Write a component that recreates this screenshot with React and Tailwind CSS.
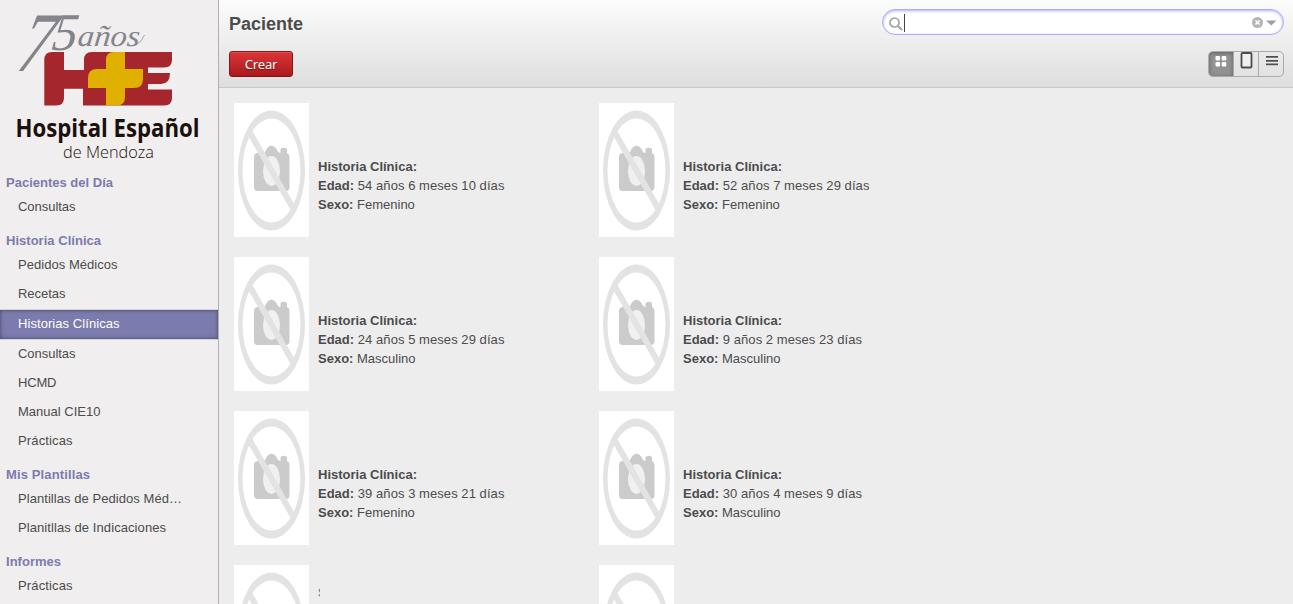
const menu = [
  { title: "Pacientes del Día", w: 107, items: [["Consultas", 57.5]] },
  {
    title: "Historia Clínica", w: 95,
    items: [["Pedidos Médicos", 99.5], ["Recetas", 47.5], ["Historias Clínicas", 101.5, true], ["Consultas", 57.5], ["HCMD", 38.5], ["Manual CIE10", 82.5], ["Prácticas", 54.5]],
  },
  { title: "Mis Plantillas", w: 84, items: [["Plantillas de Pedidos Méd…", 164], ["Planitllas de Indicaciones", 148]] },
  { title: "Informes", w: 55, items: [["Prácticas", 54.5]] },
];

const patients = [
  ["54 años 6 meses 10 días", "Femenino"],
  ["52 años 7 meses 29 días", "Femenino"],
  ["24 años 5 meses 29 días", "Masculino"],
  ["9 años 2 meses 23 días", "Masculino"],
  ["39 años 3 meses 21 días", "Femenino"],
  ["30 años 4 meses 9 días", "Masculino"],
];

function Logo() {
  return (
    <svg width="218" height="173" viewBox="0 0 218 173" className="block shrink-0">
      <g fill="#85848a" fontStyle="italic" fontFamily="Liberation Serif, serif">
        <text transform="translate(15 70.500) skewX(-14)" fontSize="85" textLength="32" lengthAdjust="spacingAndGlyphs">7</text>
        <text transform="translate(51 49.500) skewX(-8)" fontSize="53" textLength="25" lengthAdjust="spacingAndGlyphs">5</text>
        <text transform="translate(77 46) skewX(-6)" fontSize="30" textLength="62" lengthAdjust="spacingAndGlyphs">años</text>
      </g>
      <path d="M136 45Q141 43 144.500 35" fill="none" stroke="#85848a" strokeWidth=".7" />
      <path d="M52 52H64V70H84V60Q84 52 92 52H172V60Q172 67.500 164 67.500H148V73H170Q170 84 161 84H148V89.500H172V98Q172 105.500 164 105.500H83V88.700H64V98Q64 105.500 56 105.500H44.300V60Q44.300 52 52 52Z" fill="#a5262d" />
      <path d="M114 52H125V69H143V79Q143 88 134 88H125V97Q125 105.500 117 105.500H106V88H88V78Q88 69 97 69H106V60Q106 52 114 52Z" fill="#e0b000" />
      <g fill="#1c100d" fontFamily="Open Sans, sans-serif">
        <text x="15.500" y="137" fontSize="24.500" fontWeight="700" textLength="184" lengthAdjust="spacingAndGlyphs">Hospital Español</text>
        <text x="63" y="158" fontSize="16.500" fontWeight="300" textLength="91" lengthAdjust="spacingAndGlyphs">de Mendoza</text>
      </g>
    </svg>
  );
}

function FitText({ text, w, fill, bold }) {
  return (
    <svg width={w + 4} height="17" className="block overflow-visible">
      <text x="0" y="13" fontSize="13" fontWeight={bold ? 700 : 400} fill={fill} textLength={w}>{text}</text>
    </svg>
  );
}

function Placeholder() {
  return (
    <div className="h-[134px] w-[75px] shrink-0 bg-white">
      <svg width="75" height="134" viewBox="0 0 75 134" className="block blur-[0.7px]">
        <path d="M20 54Q20 50 24 50H29Q31 50 32.500 46Q34 43 37.500 42.500Q41 43 42.500 46Q44 50 46.500 50V46Q49.500 43.500 53 46V50Q55.500 51 55.500 54V84Q55.500 88 52 88H23.500Q20 88 20 84Z" fill="#cbcbcb" />
        <ellipse cx="37.500" cy="68" rx="8.500" ry="15" fill="#f0f0f0" />
        <path fillRule="evenodd" d="M4 67.500A33.500 60 0 0 1 71 67.500A33.500 60 0 0 1 4 67.500ZM8.500 67.500A29 52 0 0 0 66.500 67.500A29 52 0 0 0 8.500 67.500Z" fill="#e3e3e3" />
        <path d="M15.500 29L59.500 106" stroke="#e3e3e3" strokeWidth="6" />
      </svg>
    </div>
  );
}

export default function App() {
  return (
    <div className="flex h-[604px] w-full overflow-hidden bg-[#ededed] font-['Liberation_Sans',Arial,sans-serif] text-[13px] text-[#4c4c4c]">
      <aside className="flex w-[219px] shrink-0 flex-col border-r border-[#afafb6] bg-[#f0eeee]">
        <Logo />
        {menu.map((g) => (
          <section key={g.title} className="mb-[10px]">
            <h2 className="flex h-[19px] items-center pl-[6px]"><FitText text={g.title} w={g.w} fill="#7c7bad" bold /></h2>
            {g.items.map(([label, w, active]) =>
              active ? (
                <div key={label} className="h-[31px] pt-px">
                  <div className="h-[31px] border-y border-[#d4d2dc] bg-[#7c7bad] bg-clip-padding pt-[5px] pl-[18px] shadow-[inset_0_0_4px_rgba(0,0,0,0.45)]">
                    <FitText text={label} w={w} fill="#ffffff" />
                  </div>
                </div>
              ) : (
                <div key={label} className="h-[29px] pt-[6px] pl-[18px]"><FitText text={label} w={w} fill="#4c4c4c" /></div>
              )
            )}
          </section>
        ))}
      </aside>

      <main className="flex min-w-0 flex-1 flex-col">
        <header className="flex h-[88px] shrink-0 flex-col border-b border-[#c8c8c8] bg-linear-to-b from-[#fcfcfc] to-[#dedede] pr-[9px] pl-[10px]">
          <div className="flex h-[51px] items-start justify-between pt-[9px]">
            <h1 className="pt-[2px] text-[18px] leading-[27px] font-bold">Paciente</h1>
            <div className="flex h-[26px] w-[402px] items-center rounded-full border border-[#abaafb] bg-white pr-[6px] pl-[6px] shadow-[inset_0_1px_3px_#abaafb]">
              <svg width="14" height="14" viewBox="0 0 14 14" className="mt-[3px]" fill="none" stroke="#a3a3a3">
                <circle cx="5.500" cy="5.500" r="4.500" strokeWidth="1.700" />
                <path d="M9 9l4 4" strokeWidth="2.200" />
              </svg>
              <div className="ml-[1px] h-[18px] w-px translate-y-px bg-[#444]" />
              <svg width="25" height="12" viewBox="0 0 25 12" className="mt-px ml-auto">
                <circle cx="5.500" cy="5.500" r="5.500" fill="#b5b5b5" />
                <path d="M3.500 3.500l4 4M7.500 3.500l-4 4" stroke="white" strokeWidth="1.600" />
                <path d="M14 3.500H24.500L19.300 8.500Z" fill="#a0a0a0" />
              </svg>
            </div>
          </div>
          <div className="flex justify-between">
            <button className="flex h-[26px] w-[64px] items-center justify-center rounded-[3px] border border-[#801818] bg-linear-to-b from-[#dc3538] to-[#aa1a1c] pt-px font-['Noto_Sans',sans-serif] text-[13px] tracking-[-0.2px] text-white shadow-[inset_0_1px_0_rgba(255,255,255,0.15)] [text-shadow:0_1px_1px_rgba(0,0,0,0.4)]">Crear</button>
            <div className="flex h-[26px] w-[76px] overflow-hidden rounded-[5px] border border-[#aaaaaa]">
              <div className="flex w-[25px] justify-center border-r border-[#aaa] bg-[#929292] pt-[4px] shadow-[inset_0_1px_4px_rgba(0,0,0,0.35)]">
                <svg width="12" height="11" fill="white"><rect width="4.600" height="4.600" rx="1" x=".5" /><rect x="6.700" width="4.600" height="4.600" rx="1" /><rect x=".5" y="6" width="4.600" height="4.600" rx="1" /><rect x="6.700" y="6" width="4.600" height="4.600" rx="1" /></svg>
              </div>
              <div className="flex w-[25px] justify-center border-r border-[#aaa] pl-px">
                <svg width="13" height="17"><rect x="1.500" y="1" width="10" height="14.500" rx="1" fill="#f0f0f0" stroke="#4c4c4c" strokeWidth="1.800" /></svg>
              </div>
              <div className="flex flex-1 justify-center pt-[4px] pl-px">
                <svg width="12" height="11" fill="#4c4c4c"><rect width="12" height="1.700" y="0" /><rect y="4" width="12" height="1.700" /><rect y="7.500" width="12" height="1.700" /></svg>
              </div>
            </div>
          </div>
        </header>

        <div className="grid grid-cols-[365px_365px] content-start gap-y-[20px] pt-[15px] pl-[15px]">
          {patients.map(([age, sex]) => (
            <article key={age} className="flex h-[134px]">
              <Placeholder />
              <div className="pt-[54px] pl-[9px] leading-[19px] whitespace-nowrap">
                <p className="font-bold">Historia Clínica:</p>
                <p className="tracking-[0.06px]"><b className="tracking-normal">Edad:</b> {age}</p>
                <p><b>Sexo:</b> {sex}</p>
              </div>
            </article>
          ))}
          <article className="flex h-[39px] overflow-hidden">
            <Placeholder />
            <div className="ml-[9px] h-[39px] w-[2px] overflow-hidden pt-[18px] leading-[19px] font-bold text-[#7c7bad]">S</div>
          </article>
          <article className="flex h-[39px] overflow-hidden"><Placeholder /></article>
        </div>
      </main>
    </div>
  );
}
